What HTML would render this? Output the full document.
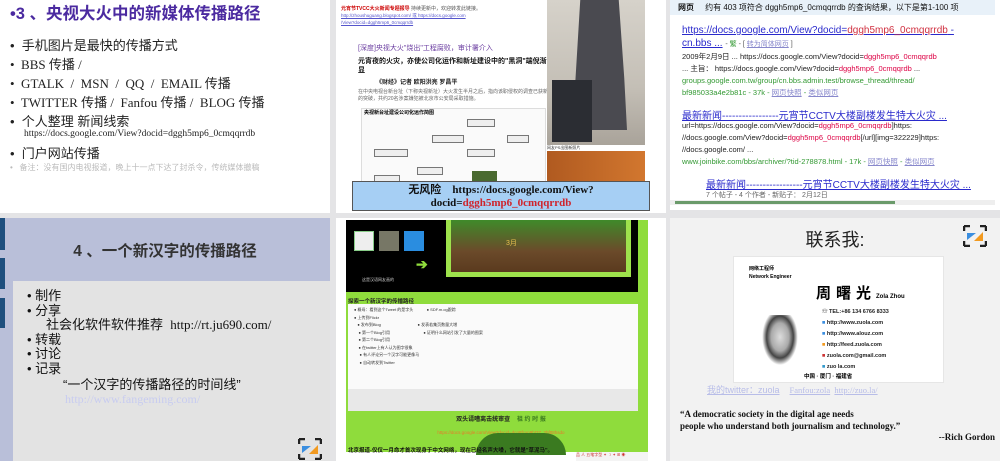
<!DOCTYPE html>
<html><head><meta charset="utf-8"><style>
*{margin:0;padding:0;box-sizing:border-box}
body{width:1000px;height:461px;background:#e4e4e6;position:relative;overflow:hidden;font-family:"Liberation Sans","Noto Sans CJK SC",sans-serif}
.a{position:absolute}
.serif{font-family:"Liberation Serif","Noto Sans CJK SC",serif}
.p1 div{white-space:nowrap}
</style></head><body>

<!-- Panel 1 -->
<div class="a p1" style="left:0;top:0;width:330px;height:213px;background:#fff">
  <div class="a" style="left:10px;top:0px;font-size:16.5px;font-weight:bold;color:#4b2aa0">•3 、央视大火中的新媒体传播路径</div>
  <div class="a" style="left:10px;top:36px;font-size:13px;color:#222;line-height:19px">
    <div>•&nbsp; 手机图片是最快的传播方式</div>
    <div class="serif">•&nbsp; BBS 传播 /</div>
    <div class="serif">•&nbsp; GTALK &nbsp;/&nbsp; MSN &nbsp;/&nbsp; QQ &nbsp;/&nbsp; EMAIL 传播</div>
    <div class="serif">•&nbsp; TWITTER 传播 /&nbsp; Fanfou 传播 /&nbsp; BLOG 传播</div>
    <div>•&nbsp; 个人整理 新闻线索</div>
  </div>
  <div class="a serif" style="left:24px;top:129px;font-size:9.5px;color:#222">https://docs.google.com/View?docid=dggh5mp6_0cmqqrrdb</div>
  <div class="a" style="left:10px;top:143px;font-size:13px;color:#222">•&nbsp; 门户网站传播</div>
  <div class="a" style="left:10px;top:162px;font-size:8px;color:#bbb">•&nbsp;&nbsp; 备注：没有国内电视报道，晚上十一点下达了封杀令，传统媒体撤稿</div>
</div>

<!-- Panel 2 -->
<div class="a" style="left:336px;top:0;width:330px;height:213px;background:#fff;overflow:hidden">
  <div class="a" style="left:5px;top:5px;font-size:5px;color:#c00;font-weight:bold">元宵节TVCC大火新闻专题报导 <span style="color:#555;font-weight:normal">持续更新中，欢迎转发此链接。</span></div>
  <div class="a" style="left:5px;top:12px;font-size:4.5px;color:#55c;text-decoration:underline;line-height:7px">http://zhoushuguang.blogspot.com/ 或 https://docs.google.com<br>/View?docid=dggh5mp6_0cmqqrrdb</div>
  <div class="a" style="left:22px;top:43px;font-size:7px;color:#6a3ca0">[深度]央视大火"烧出"工程腐败，审计署介入</div>
  <div class="a" style="left:22px;top:57px;font-size:7px;font-weight:bold;color:#111;width:190px;line-height:9px">元宵夜的火灾，亦使公司化运作和新址建设中的"黑洞"端倪渐显</div>
  <div class="a" style="left:40px;top:77px;font-size:6px;color:#222;font-weight:bold">《财经》记者 欧阳洪亮 罗昌平</div>
  <div class="a" style="left:22px;top:89px;font-size:5px;color:#666;width:190px;line-height:7px">在中央电视台新台址（下称央视新址）大火发生半月之后，指向该职侵权的调查已获新的突破，共约20名涉案嫌犯被北京市公安局采取措施。</div>
  <div class="a" style="left:25px;top:108px;width:185px;height:80px;border:1px solid #ddd;background:#fafafa">
    <div class="a" style="left:2px;top:0;font-size:5px;font-weight:bold">央视新台址建设公司化运作简图</div>
    <div class="a" style="left:105px;top:10px;width:28px;height:8px;border:1px solid #777;background:#eee"></div>
    <div class="a" style="left:70px;top:26px;width:32px;height:8px;border:1px solid #777;background:#eee"></div>
    <div class="a" style="left:145px;top:26px;width:22px;height:8px;border:1px solid #777;background:#eee"></div>
    <div class="a" style="left:12px;top:40px;width:34px;height:8px;border:1px solid #777;background:#eee"></div>
    <div class="a" style="left:105px;top:40px;width:28px;height:8px;border:1px solid #777;background:#eee"></div>
    <div class="a" style="left:55px;top:58px;width:26px;height:8px;border:1px solid #777;background:#eee"></div>
    <div class="a" style="left:12px;top:66px;width:26px;height:8px;border:1px solid #777;background:#eee"></div>
    <div class="a" style="left:110px;top:62px;width:25px;height:18px;background:#4a6a30"></div>
  </div>
  <div class="a" style="left:211px;top:0;width:98px;height:145px;background:linear-gradient(180deg,#d6d2ca,#c4bfb6 60%,#a9a39a)"></div>
  <div class="a" style="left:236px;top:0;width:55px;height:130px;background:#4a4a50;clip-path:polygon(15% 0,85% 0,95% 60%,100% 100%,0 100%,5% 70%)"></div>
  <div class="a" style="left:216px;top:80px;width:40px;height:62px;background:#2b2d33"></div>
  <div class="a" style="left:211px;top:145px;font-size:4px;color:#333">网友PS出图新照片</div>
  <div class="a" style="left:211px;top:151px;width:98px;height:40px;background:linear-gradient(90deg,#b05a20,#d2772f)"></div>
  <div class="a" style="left:16px;top:181px;width:298px;height:30px;background:#a6cff4;border:1px solid #555"></div>
  <div class="a serif" style="left:16px;top:183px;width:298px;text-align:center;font-size:11px;font-weight:bold;line-height:13px;color:#111"><span style="font-family:'Noto Sans CJK SC',sans-serif">无风险</span>&nbsp;&nbsp;&nbsp; https://docs.google.com/View?<br>docid=<span style="color:#d0232a">dggh5mp6_0cmqqrrdb</span></div>
</div>

<!-- Panel 3 -->
<div class="a" style="left:670px;top:0;width:330px;height:210px;background:#fff;overflow:hidden">
  <div class="a" style="left:0;top:0;width:325px;height:15px;background:#e8f1f9"></div>
  <div class="a" style="left:8px;top:2px;font-size:8px;color:#111"><b>网页</b>&nbsp;&nbsp;&nbsp;&nbsp; 约有 403 项符合 dggh5mp6_0cmqqrrdb 的查询结果，以下是第1-100 项</div>
  <div class="a" style="left:12px;top:24px;font-size:10px;color:#2a2acc;line-height:13px"><u>https://docs.google.com/View?docid=<span style="color:#d03040">dggh5mp6_0cmqqrrdb</span> -</u><br><u>cn.bbs ...</u> <span style="font-size:7px;color:#555">- <span style="color:#393">繁</span> - [ <u style="color:#88c">转为简体网页</u> ]</span></div>
  <div class="a" style="left:12px;top:51px;font-size:7.5px;color:#222;line-height:12px">2009年2月9日 ... https://docs.google.com/View?docid=<span style="color:#d04">dggh5mp6_0cmqqrdb</span><br>... 主旨： https://docs.google.com/View?docid=<span style="color:#d04">dggh5mp6_0cmqqrdb</span> ...<br><span style="color:#393">groups.google.com.tw/group/cn.bbs.admin.test/browse_thread/thread/<br>bf985033a4e2b81c - 37k - <u style="color:#88c">网页快照</u> - <u style="color:#88c">类似网页</u></span></div>
  <div class="a" style="left:12px;top:107px;font-size:10px;color:#2a2acc"><u>最新新闻-----------------元宵节CCTV大楼副楼发生特大火灾 ...</u></div>
  <div class="a" style="left:12px;top:120px;font-size:7.5px;color:#222;line-height:12px">url=https://docs.google.com/View?docid=<span style="color:#d04">dggh5mp6_0cmqqrdb</span>]https:<br>//docs.google.com/View?docid=<span style="color:#d04">dggh5mp6_0cmqqrdb</span>[/url][img=322229]https:<br>//docs.google.com/ ...<br><span style="color:#393">www.joinbike.com/bbs/archiver/?tid-278878.html - 17k - <u style="color:#88c">网页快照</u> - <u style="color:#88c">类似网页</u></span></div>
  <div class="a" style="left:36px;top:176px;font-size:10px;color:#2a2acc"><u>最新新闻-----------------元宵节CCTV大楼副楼发生特大火灾 ...</u></div>
  <div class="a" style="left:36px;top:190px;font-size:7px;color:#666">7 个帖子 - 4 个作者 - 新贴子： 2月12日</div>
  <div class="a" style="left:0;top:200px;width:325px;height:5px;background:#eee"></div>
  <div class="a" style="left:5px;top:201px;width:220px;height:3px;background:#6a9a6a"></div>
</div>

<!-- Panel 4 -->
<div class="a" style="left:0;top:218px;width:330px;height:243px;background:#b9bfd9">
  <div class="a" style="left:0;top:0;width:5px;height:32px;background:#1e4f7e"></div>
  <div class="a" style="left:0;top:40px;width:5px;height:31px;background:#1e4f7e"></div>
  <div class="a" style="left:0;top:80px;width:5px;height:30px;background:#1e4f7e"></div>
  <div class="a" style="left:0;top:21px;width:330px;text-align:center;font-size:15.5px;font-weight:bold;color:#333">4 、一个新汉字的传播路径</div>
  <div class="a" style="left:13px;top:63px;width:317px;height:180px;background:#e3e3e3"></div>
  <div class="a" style="left:27px;top:71px;font-size:13px;color:#111;line-height:14.6px">
    <div>• 制作</div><div>• 分享</div>
    <div style="padding-left:19px">社会化软件软件推荐&nbsp; <span class="serif">http://rt.ju690.com/</span></div>
    <div>• 转载</div><div>• 讨论</div><div>• 记录</div>
    <div style="padding-left:36px;margin-top:1px">“一个汉字的传播路径的时间线”</div>
    <div class="serif" style="padding-left:38px;color:#c8ccf0;font-size:12px">http://www.fangeming.com/</div>
  </div>
  <svg class="a" style="left:298px;top:220px" width="24" height="22" viewBox="0 0 24 22"><path d="M1 1h6M1 1v5M23 1h-6M23 1v5M1 21h6M1 21v-5M23 21h-6M23 21v-5" stroke="#222" stroke-width="2.5" fill="none"/><path d="M4 8h9l-9 7z" fill="#3a8ee0"/><path d="M20 7v9h-9z" fill="#f29a20"/></svg>
</div>

<!-- Panel 5 -->
<div class="a" style="left:336px;top:218px;width:330px;height:243px;background:#fff;overflow:hidden">
  <div class="a" style="left:10px;top:2px;width:302px;height:232px;background:#8fdc3c"></div>
  <div class="a" style="left:10px;top:2px;width:292px;height:72px;background:#000"></div>
  <div class="a" style="left:18px;top:13px;width:20px;height:20px;background:#eee;border:1px solid #8c8"></div>
  <div class="a" style="left:43px;top:13px;width:20px;height:20px;background:#776"></div>
  <div class="a" style="left:68px;top:13px;width:20px;height:20px;background:#2a8de0"></div>
  <div class="a" style="left:80px;top:38px;color:#8fdc3c;font-size:14px;font-weight:bold">➔</div>
  <div class="a" style="left:26px;top:59px;font-size:4px;color:#ccc">这是汉语网友画的</div>
  <div class="a" style="left:110px;top:2px;width:185px;height:57px;background:#9ee24c"></div>
  <div class="a" style="left:115px;top:2px;width:175px;height:52px;background:linear-gradient(180deg,#3f8a2a,#6b4a2a 60%,#5a3a1e)"></div>
  <div class="a" style="left:170px;top:20px;font-size:7px;color:#e8c050">3月</div>
  <div class="a" style="left:12px;top:79px;font-size:5.5px;font-weight:bold;color:#222">探索一个新汉字的传播路径</div>
  <div class="a" style="left:12px;top:86px;width:290px;height:85px;background:#fafafa"></div>
  <div class="a" style="left:12px;top:86px;width:290px;height:85px;font-size:4px;color:#333;line-height:7.5px;padding:2px 6px">
    ● 概母：看到这个Tweet 的是字头 &nbsp;&nbsp;&nbsp;&nbsp;&nbsp;&nbsp;&nbsp;&nbsp;&nbsp;&nbsp; ● SDF.m.og跟踪<br>● 上传到Flickr<br>&nbsp;&nbsp;&nbsp;● 发布到Blog &nbsp;&nbsp;&nbsp;&nbsp;&nbsp;&nbsp;&nbsp;&nbsp;&nbsp;&nbsp;&nbsp;&nbsp;&nbsp;&nbsp;&nbsp;&nbsp;&nbsp;&nbsp;&nbsp;&nbsp;&nbsp;&nbsp;&nbsp;&nbsp;&nbsp;&nbsp;&nbsp;&nbsp;&nbsp;&nbsp;&nbsp; ● 发表若集页数量大增<br>&nbsp;&nbsp;&nbsp;&nbsp;● 第一个Blog引用 &nbsp;&nbsp;&nbsp;&nbsp;&nbsp;&nbsp;&nbsp;&nbsp;&nbsp;&nbsp;&nbsp;&nbsp;&nbsp;&nbsp;&nbsp;&nbsp;&nbsp;&nbsp;&nbsp;&nbsp;&nbsp;&nbsp;&nbsp;&nbsp;&nbsp;&nbsp;&nbsp;&nbsp; ● 证明什么网站引发了大量的图案<br>&nbsp;&nbsp;&nbsp;&nbsp;● 第二个Blog引用<br>&nbsp;&nbsp;&nbsp;&nbsp;● 在twitter上有人认为图字很象<br>&nbsp;&nbsp;&nbsp;&nbsp;&nbsp;● 有人评论另一个汉字可能更像马<br>&nbsp;&nbsp;&nbsp;&nbsp;&nbsp;● 自动转发到Twitter
  </div>
  <div class="a" style="left:12px;top:171px;width:290px;height:22px;background:#e8e8e8"></div>
  <div class="a" style="left:0;top:196px;width:330px;text-align:center;font-size:6px;font-weight:bold;color:#222">双头请嘈离击统审查 &nbsp;&nbsp;&nbsp;<span style="color:#3a7a20">祖 约 时 报</span></div>
  <div class="a" style="left:0;top:212px;width:330px;text-align:center;font-size:4.5px;color:#e87a2a">https://docs.google.com/View?docid=dcg8fcxp9ht37_2hftt8hsdo</div>
  <div class="a" style="left:140px;top:215px;width:90px;height:22px;background:#3a7a20;border-radius:40px 40px 0 0"></div>
  <div class="a" style="left:12px;top:228px;font-size:5.5px;font-weight:bold;color:#111">北京报道-仅仅一月命才首次现身于中文网络，现在已经名声大噪，它就是"草泥马"。</div>
  <div class="a" style="left:240px;top:234px;width:72px;height:9px;background:#f4f4f4;font-size:4px;color:#c33">品 人 五笔字型 ✦ ☽ ✦ ⊞ ◉</div>
</div>

<!-- Panel 6 -->
<div class="a" style="left:670px;top:218px;width:330px;height:243px;background:#f2f2f2">
  <div class="a" style="left:0;top:8px;width:330px;text-align:center;font-size:18px;color:#222">联系我:</div>
  <svg class="a" style="left:293px;top:7px" width="24" height="22" viewBox="0 0 24 22"><path d="M1 1h6M1 1v5M23 1h-6M23 1v5M1 21h6M1 21v-5M23 21h-6M23 21v-5" stroke="#222" stroke-width="2.5" fill="none"/><path d="M4 8h9l-9 7z" fill="#3a8ee0"/><path d="M20 7v9h-9z" fill="#f29a20"/></svg>
  <div class="a" style="left:63px;top:38px;width:211px;height:127px;background:#fff;border:1px solid #e6e6e6">
    <div class="a" style="left:15px;top:8px;font-size:5px;font-weight:bold;line-height:8px">网络工程师<br>Network Engineer</div>
    <div class="a" style="left:82px;top:25px;font-size:15px;font-weight:bold;letter-spacing:5px">周曙光<span style="font-size:6px;letter-spacing:0">Zola Zhou</span></div>
    <div class="a" style="left:25px;top:58px;width:42px;height:55px;background:radial-gradient(ellipse at 50% 40%,#ddd 0,#aaa 30%,#444 45%,#fff 60%)"></div>
    <div class="a" style="left:88px;top:50px;font-size:5.5px;font-weight:bold;color:#222;line-height:11px">
      <div>☏ TEL:+86 134 6766 8333</div>
      <div><span style="color:#3a8ee0">■</span> http://www.zuola.com</div>
      <div><span style="color:#3a8ee0">■</span> http://www.alouz.com</div>
      <div><span style="color:#f29a20">■</span> http://feed.zuola.com</div>
      <div><span style="color:#c33">■</span> zuola.com@gmail.com</div>
      <div><span style="color:#39c">■</span> zuo la.com</div>
    </div>
    <div class="a" style="left:70px;top:115px;font-size:5.5px;font-weight:bold">中国 · 厦门 · 福建省</div>
  </div>
  <div class="a" style="left:37px;top:165px;font-size:9px;color:#b8bde8"><u>我的twitter：zuola</u> &nbsp;&nbsp;&nbsp;<span class="serif" style="font-size:8.5px"><u>Fanfou:zola</u>&nbsp; <u>http://zuo.la/</u></span></div>
  <div class="a serif" style="left:10px;top:190px;font-size:9px;font-weight:bold;line-height:12px;color:#111">“A democratic society in the digital age needs<br>people who understand both journalism and technology.”</div>
  <div class="a serif" style="right:5px;top:214px;font-size:9px;font-weight:bold;color:#111">--Rich Gordon</div>
</div>
</body></html>
